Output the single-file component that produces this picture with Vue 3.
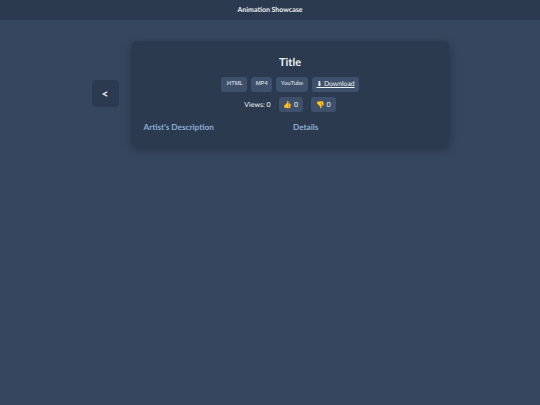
<template>
  <div class="page">
    <header class="topbar">Animation Showcase</header>
    <main class="stage">
      <button class="back">&lt;</button>
      <section class="card">
        <h1 class="title">Title</h1>
        <div class="links">
          <button class="chip">.HTML</button>
          <button class="chip">MP4</button>
          <button class="chip">YouTube</button>
          <a class="chip download">⬇ Download</a>
        </div>
        <div class="stats">
          <span class="views">Views: 0</span>
          <button class="vote">👍 0</button>
          <button class="vote">👎 0</button>
        </div>
        <div class="info">
          <h2 class="heading">Artist's Description</h2>
          <h2 class="heading">Details</h2>
        </div>
      </section>
    </main>
  </div>
</template>

<script setup>
</script>

<style>
html,
body {
  margin: 0;
  background: #36465e;
}
</style>

<style scoped>
.page {
  min-height: 405px;
  background: #36465e;
  color: #ecf0f1;
  font-family: Lato, sans-serif;
  text-rendering: geometricPrecision;
}

.topbar {
  height: 20px;
  line-height: 20px;
  text-align: center;
  background: #2c3a50;
  font-size: 7px;
  font-weight: 700;
}

.stage {
  display: flex;
  justify-content: center;
  align-items: center;
  gap: 13px;
  padding-top: 21px;
}

.back {
  width: 27px;
  height: 27px;
  padding: 0;
  border: 0;
  border-radius: 4px;
  background: #2c3a50;
  color: #ecf0f1;
  font-family: Lato, sans-serif;
  font-size: 12px;
  font-weight: 700;
  text-rendering: geometricPrecision;
}

.card {
  width: 317px;
  height: 105px;
  box-sizing: border-box;
  padding: 15px 12px 0;
  border-radius: 5px;
  background: #2c3a50;
  box-shadow: 0 3px 10px rgba(0, 0, 0, 0.3);
}

.title {
  margin: 0 0 7px;
  text-align: center;
  font-size: 11px;
  line-height: 14px;
  font-weight: 700;
}

.links {
  display: flex;
  justify-content: center;
  gap: 4px;
}

.chip {
  display: flex;
  align-items: center;
  height: 15px;
  padding: 0 4.5px;
  border: 0;
  border-radius: 3px;
  background: #3f506c;
  color: #ecf0f1;
  font-family: "Liberation Sans", sans-serif;
  font-size: 5.8px;
  line-height: 1;
  text-rendering: geometricPrecision;
}

.download {
  font-family: Lato, sans-serif;
  font-size: 6.8px;
  text-decoration: underline;
}

.stats {
  display: flex;
  justify-content: center;
  align-items: center;
  gap: 8px;
  margin-top: 5px;
}

.views {
  font-size: 7px;
}

.vote {
  height: 15px;
  padding: 0 5px;
  border: 0;
  border-radius: 3px;
  background: #3f506c;
  color: #ecf0f1;
  font-family: Lato, sans-serif;
  font-size: 7px;
  text-rendering: geometricPrecision;
}

.info {
  display: grid;
  grid-template-columns: 1fr 1fr;
  gap: 6px;
  margin-top: 10px;
}

.heading {
  margin: 0;
  font-size: 8.2px;
  line-height: 11px;
  font-weight: 700;
  color: #8aadd2;
}
</style>
